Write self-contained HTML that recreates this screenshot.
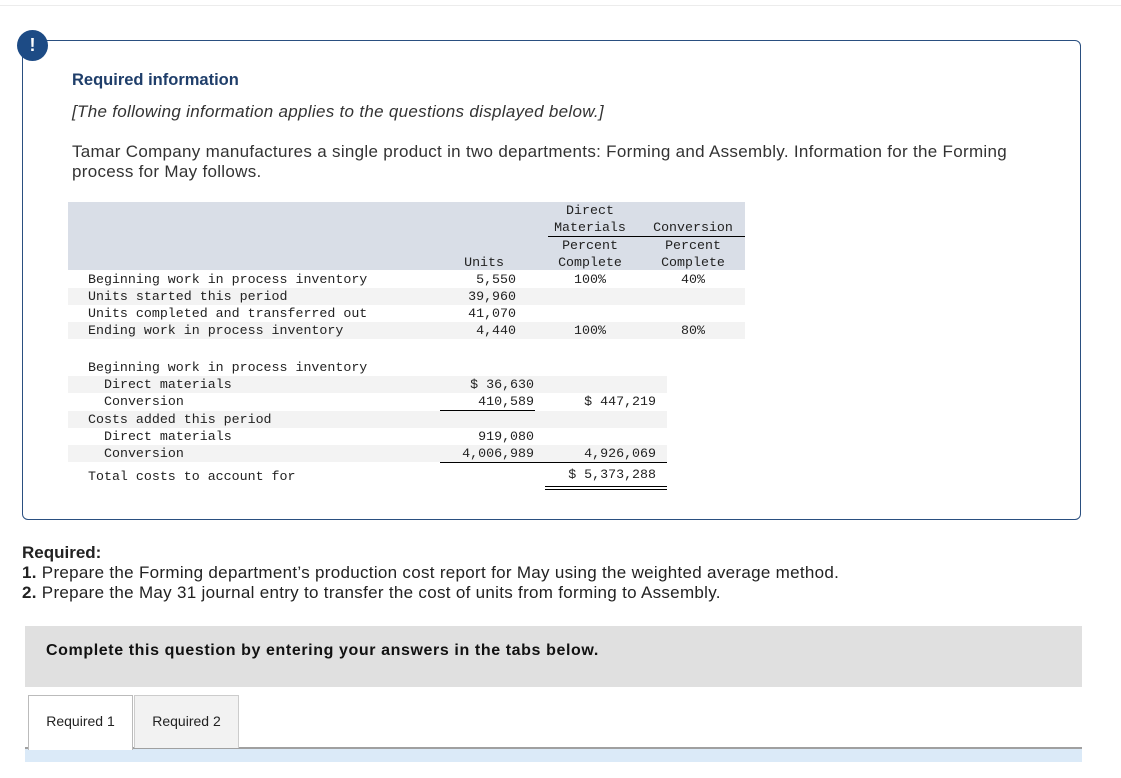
<!DOCTYPE html>
<html><head><meta charset="utf-8"><style>
body{margin:0;width:1121px;height:778px;background:#fff;position:relative;overflow:hidden;font-family:"Liberation Sans",sans-serif;color:#333}
.a{position:absolute;white-space:nowrap}
.m{font-family:"Liberation Mono",monospace;font-size:13.3px;line-height:17px;color:#222}
.r{text-align:right}
.c{text-align:center}
.bg{position:absolute;background:#f3f3f3}
.ln{position:absolute;height:1px;background:#000}
.s{font-size:17px;line-height:20px;color:#333;letter-spacing:0.3px}
</style></head><body>
<div class="a" style="left:0;top:5px;width:1121px;height:1px;background:#ececec"></div>
<div class="a" style="left:22px;top:40px;width:1057px;height:478px;border:1px solid #2a4f80;border-radius:6px"></div>
<div class="a" style="left:17px;top:30px;width:31px;height:31px;border-radius:50%;background:#1d4b85;color:#fff;font-weight:bold;font-size:18px;line-height:31px;text-align:center">!</div>
<div class="a" style="left:72px;top:71px;font-size:16.5px;font-weight:bold;color:#1f3e6a">Required information</div>
<div class="a s" style="left:72px;top:102px;font-style:italic">[The following information applies to the questions displayed below.]</div>
<div class="a s" style="left:72px;top:142px">Tamar Company manufactures a single product in two departments: Forming and Assembly. Information for the Forming</div>
<div class="a s" style="left:72px;top:162px">process for May follows.</div>

<div class="a" style="left:68px;top:202px;width:677px;height:68px;background:#d9dee7"></div>
<div class="bg" style="left:68px;top:288px;width:677px;height:17px"></div>
<div class="bg" style="left:68px;top:322px;width:677px;height:17px"></div>
<div class="ln" style="left:548px;top:236px;width:197px"></div>
<div class="a m c" style="left:540px;width:100px;top:202px">Direct</div>
<div class="a m c" style="left:540px;width:100px;top:219px">Materials</div>
<div class="a m c" style="left:643px;width:100px;top:219px">Conversion</div>
<div class="a m c" style="left:540px;width:100px;top:237px">Percent</div>
<div class="a m c" style="left:643px;width:100px;top:237px">Percent</div>
<div class="a m c" style="left:540px;width:100px;top:254px">Complete</div>
<div class="a m c" style="left:643px;width:100px;top:254px">Complete</div>
<div class="a m r" style="left:416px;width:88px;top:254px">Units</div>

<div class="a m" style="left:88px;top:271px">Beginning work in process inventory</div>
<div class="a m" style="left:88px;top:288px">Units started this period</div>
<div class="a m" style="left:88px;top:305px">Units completed and transferred out</div>
<div class="a m" style="left:88px;top:322px">Ending work in process inventory</div>
<div class="a m r" style="left:416px;width:100px;top:271px">5,550</div>
<div class="a m r" style="left:416px;width:100px;top:288px">39,960</div>
<div class="a m r" style="left:416px;width:100px;top:305px">41,070</div>
<div class="a m r" style="left:416px;width:100px;top:322px">4,440</div>
<div class="a m" style="left:574px;top:271px">100%</div>
<div class="a m" style="left:574px;top:322px">100%</div>
<div class="a m" style="left:681px;top:271px">40%</div>
<div class="a m" style="left:681px;top:322px">80%</div>

<div class="bg" style="left:68px;top:376px;width:599px;height:17px"></div>
<div class="bg" style="left:68px;top:411px;width:599px;height:17px"></div>
<div class="bg" style="left:68px;top:445px;width:599px;height:17px"></div>
<div class="a m" style="left:88px;top:359px">Beginning work in process inventory</div>
<div class="a m" style="left:104px;top:376px">Direct materials</div>
<div class="a m" style="left:104px;top:393px">Conversion</div>
<div class="a m" style="left:88px;top:411px">Costs added this period</div>
<div class="a m" style="left:104px;top:428px">Direct materials</div>
<div class="a m" style="left:104px;top:445px">Conversion</div>
<div class="a m" style="left:88px;top:468px">Total costs to account for</div>
<div class="a m r" style="left:434px;width:100px;top:376px">$ 36,630</div>
<div class="a m r" style="left:434px;width:100px;top:393px">410,589</div>
<div class="a m r" style="left:434px;width:100px;top:428px">919,080</div>
<div class="a m r" style="left:434px;width:100px;top:445px">4,006,989</div>
<div class="a m r" style="left:556px;width:100px;top:393px">$ 447,219</div>
<div class="a m r" style="left:556px;width:100px;top:445px">4,926,069</div>
<div class="a m r" style="left:556px;width:100px;top:466px">$ 5,373,288</div>
<div class="ln" style="left:440px;top:410px;width:95px"></div>
<div class="ln" style="left:440px;top:462px;width:227px"></div>
<div class="ln" style="left:545px;top:486px;width:122px"></div>
<div class="ln" style="left:545px;top:489px;width:122px"></div>

<div class="a" style="left:22px;top:543px;font-size:17px;font-weight:bold;color:#222">Required:</div>
<div class="a s" style="left:22px;top:563px;color:#222"><b>1.</b> Prepare the Forming department’s production cost report for May using the weighted average method.</div>
<div class="a s" style="left:22px;top:583px;color:#222"><b>2.</b> Prepare the May 31 journal entry to transfer the cost of units from forming to Assembly.</div>

<div class="a" style="left:25px;top:626px;width:1057px;height:61px;background:#e0e0e0"></div>
<div class="a" style="left:46px;top:642px;font-size:16px;font-weight:bold;color:#111;letter-spacing:0.6px">Complete this question by entering your answers in the tabs below.</div>
<div class="a" style="left:25px;top:747px;width:1057px;height:2px;background:#a0a0a0"></div>
<div class="a" style="left:25px;top:749px;width:1057px;height:13px;background:#dbeaf8"></div>
<div class="a" style="left:28px;top:695px;width:103px;height:54px;border:1px solid #bbb;border-bottom:none;background:#fff"></div>
<div class="a" style="left:134px;top:695px;width:103px;height:52px;border:1px solid #ccc;border-bottom:none;background:#f2f2f2"></div>
<div class="a" style="left:28px;top:713px;width:105px;text-align:center;font-size:14px;color:#222">Required 1</div>
<div class="a" style="left:134px;top:713px;width:105px;text-align:center;font-size:14px;color:#222">Required 2</div>
</body></html>
